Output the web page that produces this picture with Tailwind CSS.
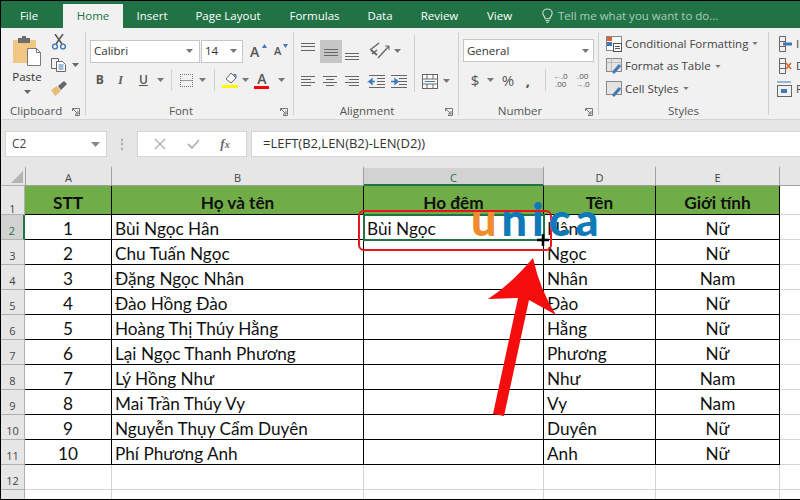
<!doctype html>
<html>
<head>
<meta charset="utf-8">
<script src="https://cdn.jsdelivr.net/npm/@tailwindcss/browser@4"></script>
</head>
<body class="m-0 w-[800px] h-[500px] overflow-hidden bg-black font-['Open_Sans','Noto_Sans',sans-serif]">
<div class="w-[800px] h-[500px] overflow-hidden flex flex-col pt-px pb-px pl-px relative">
  <!-- tabs -->
  <div class="h-[27px] bg-[#217346] flex items-end text-[11.5px] text-white shrink-0">
    <div class="w-[62px] h-6 flex items-center justify-center pr-[6px]">File</div>
    <div class="w-[60px] h-6 flex items-center justify-center bg-[#f1f1f1] text-[#217346]">Home</div>
    <div class="w-[58px] h-6 flex items-center justify-center">Insert</div>
    <div class="w-[94px] h-6 flex items-center justify-center">Page Layout</div>
    <div class="w-[79px] h-6 flex items-center justify-center">Formulas</div>
    <div class="w-[52px] h-6 flex items-center justify-center">Data</div>
    <div class="w-[67px] h-6 flex items-center justify-center">Review</div>
    <div class="w-[53px] h-6 flex items-center justify-center">View</div>
    <div class="h-6 flex items-center gap-[4px] ml-[15px] text-[#a9cdb9]">
      <svg width="13" height="16" viewBox="0 0 14 16" fill="none" stroke="#c6dfd1" stroke-width="1.2"><path d="M4.500 11 C4 8 2 7.500 2 5 A5 4.500 0 0 1 12 5 C12 7.500 10 8 9.500 11 Z"/><path d="M5 13h4M6 15h2"/></svg>
      <span>Tell me what you want to do...</span>
    </div>
  </div>
  <!-- ribbon -->
  <div class="h-[92px] bg-[#f1f1f1] border-b border-[#d4d4d4] flex text-[#444] text-[11.5px] shrink-0">
    <!-- clipboard -->
    <div class="w-[85px] border-r border-[#d0d0d0] my-[4px] flex flex-col relative shrink-0">
      <div class="flex-1 flex pl-[11px] gap-[9px]">
        <div class="flex flex-col items-center w-[30px]">
          <svg width="30" height="32" viewBox="0 0 30 32" class="mt-[3px]">
            <rect x="1" y="5" width="23" height="23" fill="#f0c883"/><rect x="6" y="3" width="12" height="5" fill="#6d6d6d"/><rect x="10" y="1" width="4" height="3" fill="#6d6d6d"/>
            <path d="M15.500 13.500h9l4 4v13h-13z" fill="#fff" stroke="#7a7a7a"/><path d="M24.500 13.500v4h4" fill="none" stroke="#7a7a7a"/>
          </svg>
          <span class="text-[11.5px] leading-[14px] mt-[3px] text-[#333]">Paste</span>
          <svg width="7" height="4" viewBox="0 0 7 4" class="mt-[6px]"><path d="M0 0h7L3.500 4z" fill="#666"/></svg>
        </div>
        <div class="flex flex-col items-start">
          <svg width="16" height="16" viewBox="0 0 16 16" fill="none" class="mt-[2px]"><path d="M4 0l7 10M12 0L5 10" stroke="#555" stroke-width="1.500"/><circle cx="4" cy="12.500" r="2.400" stroke="#3f78b5" stroke-width="1.400"/><circle cx="12" cy="12.500" r="2.400" stroke="#3f78b5" stroke-width="1.400"/></svg>
          <div class="flex items-center gap-[5px] mt-[8px]">
            <svg width="16" height="14" viewBox="0 0 16 14" fill="none" stroke="#666"><path d="M.500.500h7v10h-7z" fill="#f4f4f4"/><path d="M5.500 3.500h6l3 3v7h-9z" fill="#fff"/><path d="M7.500 7h5M7.500 9h5M7.500 11h5" stroke="#3f78b5"/></svg>
            <svg width="7" height="4" viewBox="0 0 7 4"><path d="M0 0h7L3.500 4z" fill="#666"/></svg>
          </div>
          <svg width="16" height="15" viewBox="0 0 16 15" class="mt-[9px]"><path d="M0 9l6-4 4 5-6 5z" fill="#e8bd78"/><path d="M7 5l6-5 3 3-6 6z" fill="#666"/></svg>
        </div>
      </div>
      <div class="h-[8px] flex items-center pl-[9px] text-[#555]">Clipboard</div>
      <svg class="absolute right-[5px] bottom-[-1px]" width="8" height="8" viewBox="0 0 8 8" fill="none" stroke="#777"><path d="M.500 3V.500H7.500V7.500H3M1 1l5 5M6 3v3H3"/></svg>
    </div>
    <!-- font -->
    <div class="w-[208px] border-r border-[#d0d0d0] my-[4px] flex flex-col relative shrink-0 pl-[4px]">
      <div class="flex-1 flex flex-col">
        <div class="flex items-center h-[24px] mt-[7px]">
          <div class="w-[110px] h-[23px] bg-white border border-[#c6c6c6] flex items-center justify-between pl-[3px] pr-[6px] text-[#333]"><span>Calibri</span><svg width="7" height="4" viewBox="0 0 7 4"><path d="M0 0h7L3.500 4z" fill="#777"/></svg></div>
          <div class="w-[42px] h-[23px] bg-white border border-[#c6c6c6] flex items-center justify-between pl-[3px] pr-[5px] ml-px text-[#333]"><span>14</span><svg width="7" height="4" viewBox="0 0 7 4"><path d="M0 0h7L3.500 4z" fill="#777"/></svg></div>
          <span class="ml-[7px] text-[14px] font-semibold text-[#555] w-[12px]">A</span><svg width="5" height="4" viewBox="0 0 5 4" class="-mt-[10px]"><path d="M0 4h5L2.500 0z" fill="#3f78b5"/></svg>
          <span class="ml-[7px] text-[11px] font-semibold text-[#555] w-[9px]">A</span><svg width="5" height="4" viewBox="0 0 5 4" class="-mt-[10px]"><path d="M0 0h5L2.500 4z" fill="#3f78b5"/></svg>
        </div>
        <div class="flex items-center h-[24px] mt-[5px] text-[#555] text-[12px]">
          <b class="w-[20px] text-center">B</b><i class="font-['Liberation_Serif'] w-[22px] text-center font-bold text-[#666] text-[13px]">I</i><u class="w-[24px] text-center font-semibold">U</u>
          <span class="w-[10px] flex justify-center"><svg width="7" height="4" viewBox="0 0 7 4"><path d="M0 0h7L3.500 4z" fill="#777"/></svg></span>
          <span class="w-px h-[22px] bg-[#d0d0d0] ml-[6px]"></span>
          <span class="w-[13px] h-[13px] border border-dotted border-[#777] ml-[8px] bg-[linear-gradient(#999,#999)] bg-[length:100%_1px] bg-center bg-no-repeat"></span>
          <span class="w-[20px] flex justify-center"><svg width="7" height="4" viewBox="0 0 7 4"><path d="M0 0h7L3.500 4z" fill="#777"/></svg></span>
          <span class="w-px h-[22px] bg-[#d0d0d0] ml-px"></span>
          <span class="flex flex-col items-center w-[17px] ml-[7px]"><svg width="15" height="13" viewBox="0 0 15 13"><path d="M3 7l5-6 5 5-5 5z" fill="#fff" stroke="#666"/><path d="M10 2h3l1 4z" fill="#3f78b5"/></svg><span class="w-[16px] h-[3px] bg-[#ffff00]"></span></span>
          <span class="w-[14px] flex justify-center"><svg width="7" height="4" viewBox="0 0 7 4"><path d="M0 0h7L3.500 4z" fill="#777"/></svg></span>
          <span class="flex flex-col items-center w-[15px] ml-[2px] leading-[14px] font-semibold text-[14px]">A<span class="w-[15px] h-[3px] bg-[#ff0000]"></span></span>
          <span class="w-[24px] flex justify-center"><svg width="7" height="4" viewBox="0 0 7 4"><path d="M0 0h7L3.500 4z" fill="#777"/></svg></span>
        </div>
      </div>
      <div class="h-[8px] flex items-center justify-center text-[#555] pr-[21px]">Font</div>
      <svg class="absolute right-[5px] bottom-[-1px]" width="8" height="8" viewBox="0 0 8 8" fill="none" stroke="#777"><path d="M.500 3V.500H7.500V7.500H3M1 1l5 5M6 3v3H3"/></svg>
    </div>
    <!-- alignment -->
    <div class="w-[165px] border-r border-[#d0d0d0] my-[4px] flex flex-col relative shrink-0 pl-[4px]">
      <div class="flex-1 flex items-start">
        <div class="w-[110px] flex flex-col shrink-0">
          <div class="flex h-[24px] mt-[7px] items-center">
            <svg width="22" height="23" viewBox="0 0 22 23" stroke="#666"><path d="M3 3.500h14M3 6.500h14M3 10.500h14" fill="none"/></svg>
            <svg width="22" height="23" viewBox="0 0 22 23" stroke="#666"><rect width="22" height="23" fill="#c6c6c6" stroke="none"/><path d="M4 9.500h14M4 12.500h14M4 15.500h14"/></svg>
            <svg width="22" height="23" viewBox="0 0 22 23" stroke="#666"><path d="M3 13.500h14M3 16.500h14M3 19.500h14"/></svg>
            <svg width="22" height="20" viewBox="0 0 22 20" class="ml-[5px]" fill="none"><path d="M1 9l9-7M3 13l5-4" stroke="#666" stroke-width="1.500"/><path d="M2 9l6 5" stroke="#666" stroke-width="2"/><path d="M9 17L20 5" stroke="#666" stroke-width="1.300"/><path d="M16 5h4v4" stroke="#666"/></svg>
            <svg width="7" height="4" viewBox="0 0 7 4" class="ml-[3px]"><path d="M0 0h7L3.500 4z" fill="#777"/></svg>
          </div>
          <div class="flex h-[24px] mt-[6px] items-center">
            <svg width="22" height="22" viewBox="0 0 22 22" stroke="#666"><path d="M3 6.500h14M3 9.500h10M3 12.500h14M3 15.500h10"/></svg>
            <svg width="22" height="22" viewBox="0 0 22 22" stroke="#666"><path d="M3 6.500h14M6 9.500h8M3 12.500h14M6 15.500h8"/></svg>
            <svg width="22" height="22" viewBox="0 0 22 22" stroke="#666"><path d="M3 6.500h14M7 9.500h10M3 12.500h14M7 15.500h10"/></svg>
            <svg width="22" height="22" viewBox="0 0 22 22" fill="none" stroke="#666"><path d="M5 5.500h16M13 8.500h8M13 11.500h8M13 14.500h8M5 17.500h16"/><path d="M11 11.500H5l3-2.500v5l-3-2.500" stroke="#3f78b5" stroke-width="1.400"/></svg>
            <svg width="22" height="22" viewBox="0 0 22 22" fill="none" stroke="#666"><path d="M5 5.500h16M13 8.500h8M13 11.500h8M13 14.500h8M5 17.500h16"/><path d="M5 11.500h7l-3-2.500v5l3-2.500" stroke="#3f78b5" stroke-width="1.400"/></svg>
          </div>
        </div>
        <span class="w-px h-[57px] bg-[#d0d0d0] mt-[3px] ml-[6px]"></span>
        <div class="flex items-center h-[24px] mt-[37px] ml-[7px]">
          <svg width="16" height="15" viewBox="0 0 16 15" fill="none" stroke="#666"><rect x=".5" y=".5" width="15" height="14" fill="#fff"/><path d="M.500 5h15M.500 10h15M5 .500V5M11 .500V5M5 10v5M11 10v5"/><path d="M3 7.500h10" stroke="#3f78b5"/></svg>
          <svg width="7" height="4" viewBox="0 0 7 4" class="ml-[5px]"><path d="M0 0h7L3.500 4z" fill="#777"/></svg>
        </div>
      </div>
      <div class="h-[8px] flex items-center justify-center text-[#555] pr-[22px]">Alignment</div>
      <svg class="absolute right-[5px] bottom-[-1px]" width="8" height="8" viewBox="0 0 8 8" fill="none" stroke="#777"><path d="M.500 3V.500H7.500V7.500H3M1 1l5 5M6 3v3H3"/></svg>
    </div>
    <!-- number -->
    <div class="w-[140px] border-r border-[#d0d0d0] my-[4px] flex flex-col relative shrink-0 pl-[4px]">
      <div class="flex-1 flex flex-col">
        <div class="w-[131px] h-[23px] mt-[7px] bg-white border border-[#c6c6c6] flex items-center justify-between pl-[3px] pr-[4px] text-[#333]"><span>General</span><svg width="7" height="4" viewBox="0 0 7 4"><path d="M0 0h7L3.500 4z" fill="#777"/></svg></div>
        <div class="flex items-center h-[24px] mt-[6px] text-[#555]">
          <span class="text-[15px] w-[10px] ml-[7px] text-center">$</span>
          <span class="w-[10px] ml-[5px] flex justify-center"><svg width="7" height="4" viewBox="0 0 7 4"><path d="M0 0h7L3.500 4z" fill="#777"/></svg></span>
          <span class="text-[15px] w-[14px] ml-[6px] text-center">%</span>
          <b class="text-[15px] w-[8px] ml-[9px] text-center">,</b>
          <span class="w-px h-[22px] bg-[#d0d0d0] ml-[13px]"></span>
          <span class="text-[8px] leading-[8px] w-[16px] ml-[7px] text-[#555] whitespace-nowrap"><span class="text-[#3f78b5]">←</span>.0<br>&nbsp;.00</span>
          <span class="text-[8px] leading-[8px] ml-[6px] text-[#555] whitespace-nowrap">&nbsp;.00<br><span class="text-[#3f78b5]">→</span>.0</span>
        </div>
      </div>
      <div class="h-[8px] flex items-center justify-center text-[#555] pr-[21px]">Number</div>
      <svg class="absolute right-[5px] bottom-[-1px]" width="8" height="8" viewBox="0 0 8 8" fill="none" stroke="#777"><path d="M.500 3V.500H7.500V7.500H3M1 1l5 5M6 3v3H3"/></svg>
    </div>
    <!-- styles -->
    <div class="w-[170px] border-r border-[#d0d0d0] my-[4px] flex flex-col shrink-0 pl-[7px]">
      <div class="flex-1 flex flex-col text-[#444]">
        <div class="flex items-center gap-[3px] h-[23px]">
          <svg width="16" height="16" viewBox="0 0 16 16" fill="none" stroke="#888"><rect x=".5" y=".5" width="15" height="14" fill="#fff"/><rect x="1" y="1" width="5" height="4" fill="#e0612b" stroke="none"/><rect x="1" y="6" width="5" height="4" fill="#3f78b5" stroke="none"/><rect x="7.500" y="7.500" width="8" height="8" fill="#fff" stroke="#555"/><path d="M9 10.500h5M9 12.500h5" stroke="#555"/></svg>
          <span>Conditional Formatting</span><svg width="6" height="3" viewBox="0 0 7 4" class="ml-[1px]"><path d="M0 0h7L3.500 4z" fill="#777"/></svg>
        </div>
        <div class="flex items-center gap-[3px] h-[22px]">
          <svg width="16" height="16" viewBox="0 0 16 16" fill="none" stroke="#888"><rect x=".5" y=".5" width="15" height="13" fill="#e4e4e4"/><path d="M.500 4.500h15M5.500.500v13" stroke="#bbb"/><path d="M7 15l7-8" stroke="#3f78b5" stroke-width="3"/></svg>
          <span>Format as Table</span><svg width="6" height="3" viewBox="0 0 7 4" class="ml-[1px]"><path d="M0 0h7L3.500 4z" fill="#777"/></svg>
        </div>
        <div class="flex items-center gap-[3px] h-[23px]">
          <svg width="16" height="16" viewBox="0 0 16 16" fill="none" stroke="#888"><rect x=".5" y=".5" width="15" height="13" fill="#e4e4e4"/><path d="M7 15l7-8" stroke="#3f78b5" stroke-width="3"/></svg>
          <span>Cell Styles</span><svg width="6" height="3" viewBox="0 0 7 4" class="ml-[1px]"><path d="M0 0h7L3.500 4z" fill="#777"/></svg>
        </div>
      </div>
      <div class="h-[8px] flex items-center justify-center text-[#555] pr-[7px]">Styles</div>
    </div>
    <!-- cells -->
    <div class="flex-1 flex flex-col pl-[7px] my-[4px] overflow-hidden text-[#444]">
      <div class="flex items-center gap-[3px] h-[23px] whitespace-nowrap">
        <svg width="17" height="16" viewBox="0 0 17 16" fill="none" stroke="#666" class="shrink-0"><path d="M3.500.500h6v15h-6zM3.500 5.500h6M3.500 10.500h6"/><path d="M7 8h9" stroke="#3f78b5" stroke-width="3"/></svg><span>Insert</span>
      </div>
      <div class="flex items-center gap-[3px] h-[22px] whitespace-nowrap">
        <svg width="17" height="16" viewBox="0 0 17 16" fill="none" stroke="#666" class="shrink-0"><path d="M3.500.500h6v15h-6zM3.500 5.500h6M3.500 10.500h6"/><path d="M10 5l5 6M15 5l-5 6" stroke="#e0612b" stroke-width="1.500"/></svg><span>Delete</span>
      </div>
      <div class="flex items-center gap-[3px] h-[23px] whitespace-nowrap">
        <svg width="17" height="16" viewBox="0 0 17 16" fill="none" stroke="#666" class="shrink-0"><rect x="1.500" y="4.500" width="14" height="11"/><rect x="5" y="8" width="6" height="4" fill="#3f78b5" stroke="none"/><path d="M1 1h14" stroke="#3f78b5"/></svg><span>Format</span>
      </div>
    </div>
  </div>
  <!-- formula bar -->
  <div class="h-[46px] bg-[#e6e6e6] shrink-0 flex items-start pt-[11px] pl-[4px]">
    <div class="w-[102px] h-[26px] bg-white border border-[#d4d4d4] flex items-center justify-between px-[6px] text-[12px] text-[#444]"><span>C2</span><svg width="9" height="5" viewBox="0 0 9 5"><path d="M0 0h9L4.500 5z" fill="#888"/></svg></div>
    <div class="w-[30px] h-[26px] flex items-center justify-center text-[#aaa] text-[12px] font-bold">⋮</div>
    <div class="w-[110px] h-[26px] bg-white border border-[#d4d4d4] flex items-center justify-around text-[#b4b4b4] px-[6px]">
      <svg width="12" height="12" viewBox="0 0 12 12" stroke="#b4b4b4" stroke-width="1.500"><path d="M1 1l10 10M11 1L1 11"/></svg>
      <svg width="13" height="12" viewBox="0 0 13 12" fill="none" stroke="#b4b4b4" stroke-width="1.800"><path d="M1 6l4 4 7-8"/></svg>
      <i class="font-['Liberation_Serif'] font-bold text-[13px] text-[#666]">f<span class="text-[10px]">x</span></i>
    </div>
    <div class="flex-1 h-[26px] ml-[4px] bg-white border border-[#d4d4d4] border-r-0 flex items-center pl-[11px] text-[13px] text-[#333]">=LEFT(B2,LEN(B2)-LEN(D2))</div>
  </div>
  <!-- sheet -->
  <div class="flex-1 bg-white grid grid-cols-[24px_87px_252px_180px_112px_124px_1fr] grid-rows-[20px_29px_repeat(11,25px)_1fr] font-['Lato',sans-serif] text-[17.2px] text-[#111] leading-none min-h-0 overflow-hidden">
    <!-- header -->
    <div class="bg-[#e6e6e6] border-b border-[#b0b0b0] relative"><svg class="absolute right-[2px] bottom-[2px]" width="12" height="12"><path d="M12 0V12H0z" fill="#b5b5b5"/></svg></div>
    <div class="bg-[#e6e6e6] border-l border-r border-b border-t-2 border-[#9f9f9f] border-t-[#e6e6e6] flex items-center justify-center pt-[2px] font-['Open_Sans'] text-[11px] text-[#444]">A</div>
    <div class="bg-[#e6e6e6] border-r border-b border-t-2 border-[#9f9f9f] border-t-[#e6e6e6] flex items-center justify-center pt-[2px] font-['Open_Sans'] text-[11px] text-[#444]">B</div>
    <div class="bg-[#d2d2d2] border-r border-b-2 border-t-2 border-[#217346] border-r-[#9f9f9f] border-t-[#e6e6e6] flex items-center justify-center pt-[2px] font-['Open_Sans'] text-[11px] text-[#217346]">C</div>
    <div class="bg-[#e6e6e6] border-r border-b border-t-2 border-[#9f9f9f] border-t-[#e6e6e6] flex items-center justify-center pt-[2px] font-['Open_Sans'] text-[11px] text-[#444]">D</div>
    <div class="bg-[#e6e6e6] border-r border-b border-t-2 border-[#9f9f9f] border-t-[#e6e6e6] flex items-center justify-center pt-[2px] font-['Open_Sans'] text-[11px] text-[#444]">E</div>
    <div class="bg-[#e6e6e6] border-b border-[#9f9f9f]"></div>
    <!-- row 1 -->
    <div class="bg-[#e6e6e6] border-r border-b border-[#b0b0b0] flex items-end justify-center font-['Open_Sans'] text-[11px] text-[#444]">1</div>
    <div class="bg-[#70ad47] border-r border-b border-black flex items-center justify-center pt-[5px] font-bold">STT</div>
    <div class="bg-[#70ad47] border-r border-b border-black flex items-center justify-center pt-[5px] font-bold">Họ và tên</div>
    <div class="bg-[#70ad47] border-r border-b border-black flex items-center justify-center pt-[5px] font-bold">Họ đệm</div>
    <div class="bg-[#70ad47] border-r border-b border-black flex items-center justify-center pt-[5px] font-bold">Tên</div>
    <div class="bg-[#70ad47] border-r border-b border-black flex items-center justify-center pt-[5px] font-bold">Giới tính</div>
    <div class="border-b border-[#d4d4d4]"></div>
    <!-- row 2 -->
    <div class="bg-[#d2d2d2] border-r-2 border-[#217346] border-b border-b-[#b0b0b0] flex items-center justify-center pt-[6px] font-['Open_Sans'] text-[11px] text-[#217346]">2</div>
    <div class="border-r border-b border-black flex items-center justify-center pt-[4px]">1</div>
    <div class="border-r border-b border-black flex items-center pt-[4px] pl-[3px]">Bùi Ngọc Hân</div>
    <div class="border-r border-b border-black flex items-center pt-[4px] pl-[3px] outline-2 outline-[#217346] -outline-offset-1 relative z-10">Bùi Ngọc</div>
    <div class="border-r border-b border-black flex items-center pt-[4px] pl-[3px]">Hân</div>
    <div class="border-r border-b border-black flex items-center justify-center pt-[4px]">Nữ</div>
    <div class="border-b border-[#d4d4d4]"></div>
    <!-- row 3 -->
    <div class="bg-[#e6e6e6] border-r border-b border-[#b0b0b0] flex items-center justify-center pt-[6px] font-['Open_Sans'] text-[11px] text-[#444]">3</div>
    <div class="border-r border-b border-black flex items-center justify-center pt-[4px]">2</div>
    <div class="border-r border-b border-black flex items-center pt-[4px] pl-[3px]">Chu Tuấn Ngọc</div>
    <div class="border-r border-b border-black"></div>
    <div class="border-r border-b border-black flex items-center pt-[4px] pl-[3px]">Ngọc</div>
    <div class="border-r border-b border-black flex items-center justify-center pt-[4px]">Nữ</div>
    <div class="border-b border-[#d4d4d4]"></div>
    <!-- row 4 -->
    <div class="bg-[#e6e6e6] border-r border-b border-[#b0b0b0] flex items-center justify-center pt-[6px] font-['Open_Sans'] text-[11px] text-[#444]">4</div>
    <div class="border-r border-b border-black flex items-center justify-center pt-[4px]">3</div>
    <div class="border-r border-b border-black flex items-center pt-[4px] pl-[3px]">Đặng Ngọc Nhân</div>
    <div class="border-r border-b border-black"></div>
    <div class="border-r border-b border-black flex items-center pt-[4px] pl-[3px]">Nhân</div>
    <div class="border-r border-b border-black flex items-center justify-center pt-[4px]">Nam</div>
    <div class="border-b border-[#d4d4d4]"></div>
    <!-- row 5 -->
    <div class="bg-[#e6e6e6] border-r border-b border-[#b0b0b0] flex items-center justify-center pt-[6px] font-['Open_Sans'] text-[11px] text-[#444]">5</div>
    <div class="border-r border-b border-black flex items-center justify-center pt-[4px]">4</div>
    <div class="border-r border-b border-black flex items-center pt-[4px] pl-[3px]">Đào Hồng Đào</div>
    <div class="border-r border-b border-black"></div>
    <div class="border-r border-b border-black flex items-center pt-[4px] pl-[3px]">Đào</div>
    <div class="border-r border-b border-black flex items-center justify-center pt-[4px]">Nữ</div>
    <div class="border-b border-[#d4d4d4]"></div>
    <!-- row 6 -->
    <div class="bg-[#e6e6e6] border-r border-b border-[#b0b0b0] flex items-center justify-center pt-[6px] font-['Open_Sans'] text-[11px] text-[#444]">6</div>
    <div class="border-r border-b border-black flex items-center justify-center pt-[4px]">5</div>
    <div class="border-r border-b border-black flex items-center pt-[4px] pl-[3px]">Hoàng Thị Thúy Hằng</div>
    <div class="border-r border-b border-black"></div>
    <div class="border-r border-b border-black flex items-center pt-[4px] pl-[3px]">Hằng</div>
    <div class="border-r border-b border-black flex items-center justify-center pt-[4px]">Nữ</div>
    <div class="border-b border-[#d4d4d4]"></div>
    <!-- row 7 -->
    <div class="bg-[#e6e6e6] border-r border-b border-[#b0b0b0] flex items-center justify-center pt-[6px] font-['Open_Sans'] text-[11px] text-[#444]">7</div>
    <div class="border-r border-b border-black flex items-center justify-center pt-[4px]">6</div>
    <div class="border-r border-b border-black flex items-center pt-[4px] pl-[3px]">Lại Ngọc Thanh Phương</div>
    <div class="border-r border-b border-black"></div>
    <div class="border-r border-b border-black flex items-center pt-[4px] pl-[3px]">Phương</div>
    <div class="border-r border-b border-black flex items-center justify-center pt-[4px]">Nữ</div>
    <div class="border-b border-[#d4d4d4]"></div>
    <!-- row 8 -->
    <div class="bg-[#e6e6e6] border-r border-b border-[#b0b0b0] flex items-center justify-center pt-[6px] font-['Open_Sans'] text-[11px] text-[#444]">8</div>
    <div class="border-r border-b border-black flex items-center justify-center pt-[4px]">7</div>
    <div class="border-r border-b border-black flex items-center pt-[4px] pl-[3px]">Lý Hồng Như</div>
    <div class="border-r border-b border-black"></div>
    <div class="border-r border-b border-black flex items-center pt-[4px] pl-[3px]">Như</div>
    <div class="border-r border-b border-black flex items-center justify-center pt-[4px]">Nam</div>
    <div class="border-b border-[#d4d4d4]"></div>
    <!-- row 9 -->
    <div class="bg-[#e6e6e6] border-r border-b border-[#b0b0b0] flex items-center justify-center pt-[6px] font-['Open_Sans'] text-[11px] text-[#444]">9</div>
    <div class="border-r border-b border-black flex items-center justify-center pt-[4px]">8</div>
    <div class="border-r border-b border-black flex items-center pt-[4px] pl-[3px]">Mai Trần Thúy Vy</div>
    <div class="border-r border-b border-black"></div>
    <div class="border-r border-b border-black flex items-center pt-[4px] pl-[3px]">Vy</div>
    <div class="border-r border-b border-black flex items-center justify-center pt-[4px]">Nam</div>
    <div class="border-b border-[#d4d4d4]"></div>
    <!-- row 10 -->
    <div class="bg-[#e6e6e6] border-r border-b border-[#b0b0b0] flex items-center justify-center pt-[6px] font-['Open_Sans'] text-[11px] text-[#444]">10</div>
    <div class="border-r border-b border-black flex items-center justify-center pt-[4px]">9</div>
    <div class="border-r border-b border-black flex items-center pt-[4px] pl-[3px]">Nguyễn Thụy Cẩm Duyên</div>
    <div class="border-r border-b border-black"></div>
    <div class="border-r border-b border-black flex items-center pt-[4px] pl-[3px]">Duyên</div>
    <div class="border-r border-b border-black flex items-center justify-center pt-[4px]">Nữ</div>
    <div class="border-b border-[#d4d4d4]"></div>
    <!-- row 11 -->
    <div class="bg-[#e6e6e6] border-r border-b border-[#b0b0b0] flex items-center justify-center pt-[6px] font-['Open_Sans'] text-[11px] text-[#444]">11</div>
    <div class="border-r border-b border-black flex items-center justify-center pt-[4px]">10</div>
    <div class="border-r border-b border-black flex items-center pt-[4px] pl-[3px]">Phí Phương Anh</div>
    <div class="border-r border-b border-black"></div>
    <div class="border-r border-b border-black flex items-center pt-[4px] pl-[3px]">Anh</div>
    <div class="border-r border-b border-black flex items-center justify-center pt-[4px]">Nữ</div>
    <div class="border-b border-[#d4d4d4]"></div>
    <!-- row 12 -->
    <div class="bg-[#e6e6e6] border-r border-b border-[#b0b0b0] flex items-center justify-center pt-[6px] font-['Open_Sans'] text-[11px] text-[#444]">12</div>
    <div class="border-r border-b border-[#d4d4d4]"></div>
    <div class="border-r border-b border-[#d4d4d4]"></div>
    <div class="border-r border-b border-[#d4d4d4]"></div>
    <div class="border-r border-b border-[#d4d4d4]"></div>
    <div class="border-r border-b border-[#d4d4d4]"></div>
    <div class="border-b border-[#d4d4d4]"></div>
    <!-- row 13 -->
    <div class="bg-[#e6e6e6] border-r border-[#b0b0b0]"></div>
    <div class="border-r border-[#d4d4d4]"></div>
    <div class="border-r border-[#d4d4d4]"></div>
    <div class="border-r border-[#d4d4d4]"></div>
    <div class="border-r border-[#d4d4d4]"></div>
    <div class="border-r border-[#d4d4d4]"></div>
    <div></div>
  </div>
  <!-- annotations over content -->
  <div class="absolute left-[358px] top-[210px] w-[194px] h-[41px] border-2 border-[#e8141e] rounded-[6px] z-20"></div>
  <div class="absolute left-[471px] top-[197px] flex items-end font-['Lato'] font-black text-[45px] leading-[45px] tracking-[5px] z-20"><span class="text-[#f08c2e]">u</span><span class="text-[#0f7ab8]">nica</span></div>
  <svg class="absolute left-[534px] top-[231px] z-20" width="18" height="18" viewBox="0 0 18 18"><path d="M9 3v12M3 9h12" stroke="#000" stroke-width="2.500"/></svg>
  <svg class="absolute left-0 top-0 z-20" width="800" height="500" viewBox="0 0 800 500"><path d="M493 414L518 298L488 299Q510 285 533 258Q540 290 556 315L529 300L504 416Z" fill="#f40d0d"/></svg>
</div>
</body>
</html>
